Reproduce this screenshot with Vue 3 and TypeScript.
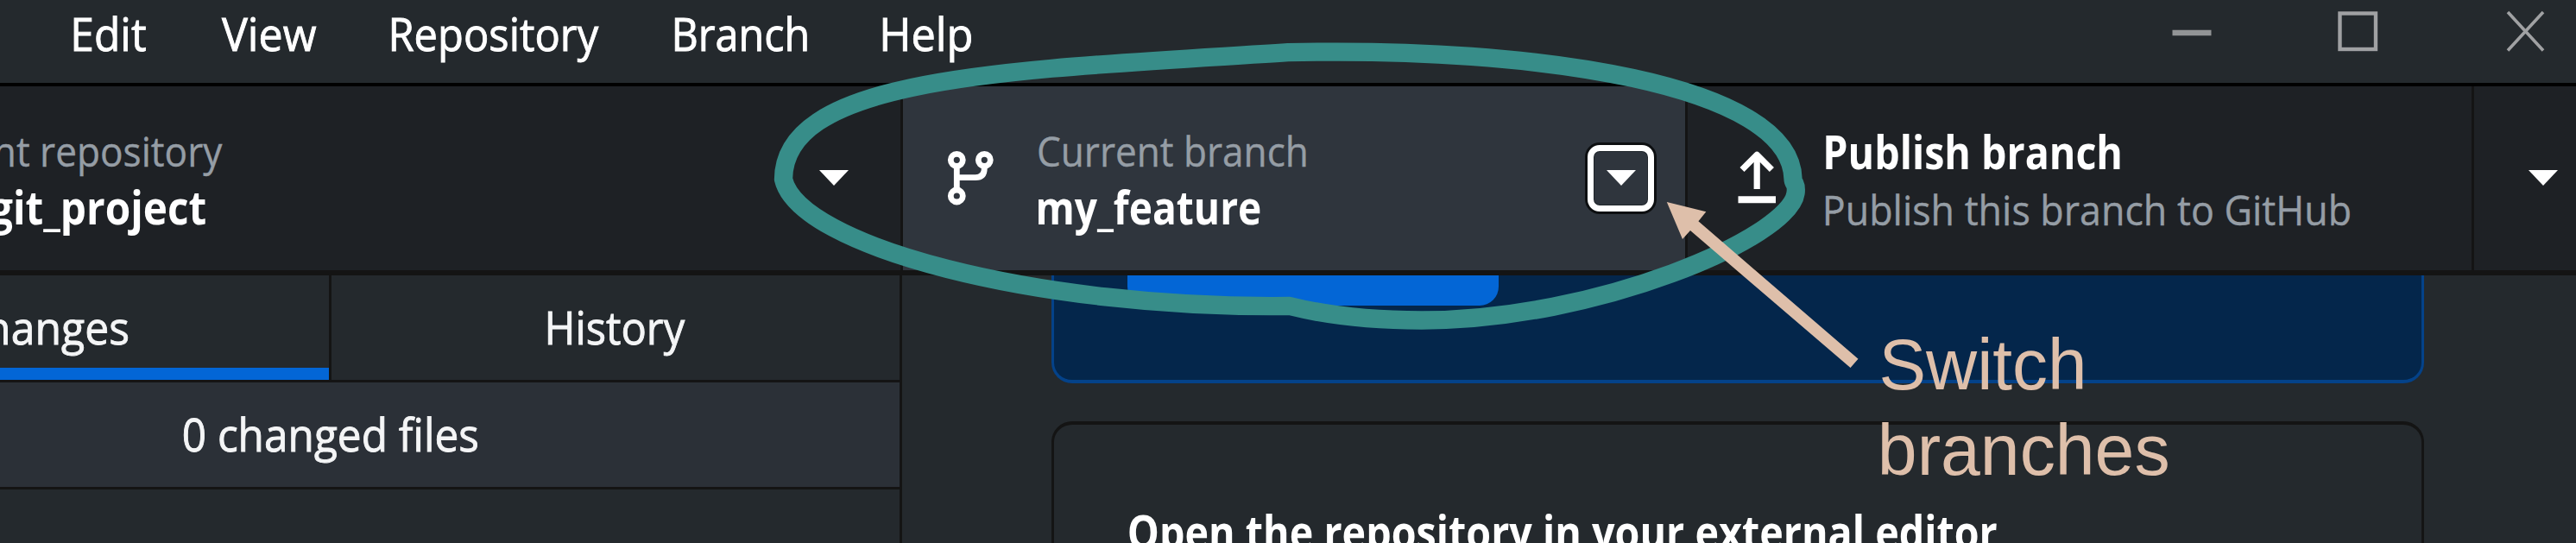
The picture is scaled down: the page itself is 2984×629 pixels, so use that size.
<script setup lang="ts">
import type { Directive } from 'vue'

interface Label {
  text: string
  width: number
}

const menus: Label[] = [
  { text: 'Edit', width: 83 },
  { text: 'View', width: 109 },
  { text: 'Repository', width: 240 },
  { text: 'Branch', width: 153 },
  { text: 'Help', width: 102 },
]

// Condenses a label so that its visible glyphs span exactly the given width.
// Measuring at ten times the size keeps the rounding of glyph bounds negligible.
const vFit: Directive<HTMLElement, number> = {
  mounted(el, { value }) {
    const ctx = document.createElement('canvas').getContext('2d')
    if (!ctx) return
    const cs = getComputedStyle(el)
    ctx.font = `${cs.fontWeight} ${parseFloat(cs.fontSize) * 10}px ${cs.fontFamily}`
    const m = ctx.measureText((el.textContent ?? '').trim())
    const left = -m.actualBoundingBoxLeft / 10
    const scale = value / (m.actualBoundingBoxRight / 10 - left)
    el.style.width = `${value}px`
    el.style.transform = `translateX(${-left * scale}px) scaleX(${scale})`
  },
}
</script>

<template>
  <div class="window">
    <header class="titlebar">
      <nav class="menus">
        <span v-for="m in menus" :key="m.text" v-fit="m.width" class="label">{{ m.text }}</span>
      </nav>
      <svg class="controls" width="484" height="96" viewBox="2500 0 484 96" fill="none" stroke="#a0a1a3">
        <path d="M2516.5 38H2561.5" stroke-width="6.5" stroke="#929496" />
        <rect x="2710.5" y="15.5" width="41.5" height="41.5" stroke-width="4.4" />
        <path d="M2905 14L2946 58.500M2946 14L2905 58.500" stroke-width="3.600" />
      </svg>
    </header>

    <div class="toolbar">
      <section class="tool repo">
        <div class="lines">
          <span v-fit="380" class="label sub">Current repository</span>
          <span v-fit="250" class="label strong project">git_project</span>
        </div>
        <svg class="caret" width="34" height="18" viewBox="0 0 34 18"><path d="M0 0H34L17 18Z" fill="#fff" /></svg>
      </section>
      <section class="tool branch">
        <svg class="branch-icon" width="56" height="70" viewBox="1096 170 56 70" fill="none" stroke="#fff" stroke-width="6.800">
          <circle cx="1108.300" cy="185.300" r="7" />
          <circle cx="1140.300" cy="185.300" r="7" />
          <circle cx="1108.300" cy="227" r="7" />
          <path d="M1108.300 192V220M1140.300 192V195Q1140.300 205.600 1130 205.600H1108.300" />
        </svg>
        <div class="lines">
          <span v-fit="310" class="label sub">Current branch</span>
          <span v-fit="257" class="label strong">my_feature</span>
        </div>
        <span class="focus-box">
          <svg width="34" height="18" viewBox="0 0 34 18"><path d="M0 0H34L17 18Z" fill="#fff" /></svg>
        </span>
      </section>
      <section class="tool publish">
        <svg class="push-icon" width="46" height="64" viewBox="2012 173 46 64" fill="none" stroke="#fff" stroke-width="7.200">
          <path d="M2035.200 219V180M2018 196.500L2035.200 179.300L2052.400 196.500" stroke-linejoin="round" />
          <path d="M2013.500 231.200H2057" stroke-width="8" />
        </svg>
        <div class="lines">
          <span v-fit="341" class="label strong">Publish branch</span>
          <span v-fit="607" class="label sub">Publish this branch to GitHub</span>
        </div>
      </section>
      <section class="tool more">
        <svg class="caret" width="34" height="18" viewBox="0 0 34 18"><path d="M0 0H34L17 18Z" fill="#fff" /></svg>
      </section>
    </div>

    <div class="body">
      <aside class="sidebar">
        <div class="tabs">
          <div class="tab active"><span v-fit="195" class="label">Changes</span></div>
          <div class="tab history"><span v-fit="159" class="label">History</span></div>
        </div>
        <div class="summary"><span v-fit="340" class="label">0 changed files</span></div>
      </aside>
      <main class="content">
        <div class="banner"><div class="button"></div></div>
        <div class="card"><span v-fit="1005" class="label strong">Open the repository in your external editor</span></div>
      </main>
    </div>

    <svg class="marks" width="2984" height="629" viewBox="0 0 2984 629">
      <path
        d="M907.500 207.700C908 87 1175 81 1492 60.700C1780 54 2074 98 2077 207Q2077 210 2079 213Q2081 217 2080 224C2073 275 1850 371 1647 371C1590 371 1540 366 1494 354.500C1200 358 925 285 907.500 207.700Z"
        fill="none" stroke="#378d89" stroke-width="21.300" stroke-linejoin="round"
      />
      <path d="M1930.800 234L1976.300 245.300L1967.400 256.300L2152.500 415.700L2143.500 426L1958 267L1949 277Z" fill="#debfaa" />
    </svg>
    <div class="callout">
      <span v-fit="234" class="label">Switch</span>
      <span v-fit="331" class="label second">branches</span>
    </div>
  </div>
</template>

<style>
body {
  margin: 0;
  background: #24292e;
}
</style>

<style scoped>
.window {
  position: relative;
  display: flex;
  flex-direction: column;
  width: 2984px;
  height: 629px;
  overflow: hidden;
  background: #24292d;
  color: #fff;
  font-family: "Open Sans", "Noto Sans", sans-serif;
  font-size: 53px;
  font-weight: 400;
}
svg {
  display: block;
  flex: none;
}
.label {
  display: block;
  flex: none;
  white-space: nowrap;
  transform-origin: 0 50%;
  -webkit-text-stroke: 0.9px currentColor;
}
.titlebar {
  display: flex;
  flex: none;
  justify-content: space-between;
  box-sizing: border-box;
  height: 100px;
  border-bottom: 4px solid #000;
}
.menus {
  display: flex;
  gap: 88px;
  padding-left: 86px;
  line-height: 77px;
}
.toolbar {
  display: flex;
  flex: none;
  box-sizing: border-box;
  height: 219px;
  border-bottom: 6px solid #141414;
  background: #1e2125;
}
.tool {
  display: flex;
  flex: none;
  box-sizing: border-box;
  border-right: 3px solid #141414;
}
.lines {
  display: flex;
  flex-direction: column;
  padding-top: 42px;
  line-height: 65px;
}
.sub {
  color: #959da5;
  font-size: 48px;
  -webkit-text-stroke-width: 0.4px;
}
.strong {
  font-weight: 700;
  -webkit-text-stroke-width: 0;
}
.repo {
  justify-content: space-between;
  width: 1046px;
  padding-right: 60px;
}
.repo .lines {
  margin-left: -122px;
}
.project {
  margin-left: 110px;
}
.caret {
  margin-top: 97px;
}
.branch {
  width: 909px;
  background: #2f353d;
}
.branch-icon {
  margin: 70px 0 0 50px;
}
.branch .lines {
  width: 634px;
  margin-left: 51px;
}
.focus-box {
  display: flex;
  flex: none;
  align-items: center;
  justify-content: center;
  box-sizing: border-box;
  width: 77px;
  height: 77px;
  margin-top: 68px;
  margin-left: 2px;
  padding-bottom: 1px;
  border: 7.5px solid #fff;
  border-radius: 14px;
  background: #2f353d;
  box-shadow: 0 0 0 3px #0d0f11, inset 0 0 0 1px #20262b;
}
.publish {
  width: 911px;
}
.push-icon {
  margin: 73px 0 0 57px;
}
.publish .lines {
  margin-left: 57px;
  line-height: 67px;
}
.more {
  flex: 1;
  padding-left: 63px;
  border-right: 0;
}
.body {
  display: flex;
  flex: 1;
  min-height: 0;
}
.sidebar {
  flex: none;
  box-sizing: border-box;
  width: 1045px;
  border-right: 3px solid #141414;
}
.tabs {
  display: flex;
  box-sizing: border-box;
  height: 124px;
  border-bottom: 3px solid #141414;
  line-height: 120px;
}
.tab {
  box-sizing: border-box;
}
.active {
  width: 384px;
  border-right: 3px solid #141414;
  background: linear-gradient(#0366d6, #0366d6) 0 100% / 100% 14px no-repeat;
}
.active .label {
  margin-left: -47px;
}
.history {
  padding-left: 251px;
}
.tab .label,
.summary .label {
  color: #f4f5f6;
}
.summary {
  box-sizing: border-box;
  height: 124px;
  padding-left: 213px;
  border-bottom: 3px solid #141414;
  background: #2b3037;
  line-height: 119px;
}
.content {
  display: flex;
  flex: none;
  flex-direction: column;
  gap: 44px;
  width: 1590px;
  margin-left: 173px;
}
.banner {
  flex: none;
  box-sizing: border-box;
  height: 125px;
  border: 3px solid #044289;
  border-top: 0;
  border-bottom-width: 4px;
  border-radius: 0 0 24px 24px;
  background: #04264b;
}
.button {
  width: 430px;
  height: 35px;
  margin-left: 85px;
  border-radius: 0 0 22px 22px;
  background: #0366d6;
}
.card {
  flex: none;
  box-sizing: border-box;
  height: 200px;
  padding: 88px 0 0 87px;
  border: 3px solid #141414;
  border-top-width: 4px;
  border-radius: 24px;
  line-height: 72px;
}
.marks {
  position: absolute;
  top: 0;
  left: 0;
}
.callout {
  position: absolute;
  top: 373px;
  left: 2179px;
  color: #debfaa;
  font-family: "Liberation Sans", Arial, sans-serif;
  font-size: 83px;
  line-height: 99px;
}
.callout .label {
  -webkit-text-stroke-width: 0;
}
.second {
  margin-left: 1px;
}
</style>
